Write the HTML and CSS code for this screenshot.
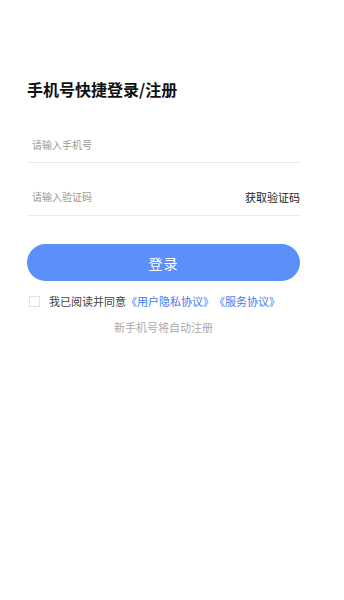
FILE: index.html
```html
<!DOCTYPE html>
<html lang="zh-CN">

<head>
    <meta charset="UTF-8">
    <meta name="viewport" content="width=device-width, initial-scale=1.0">
    <title>手机号快捷登录</title>
    <link rel="stylesheet" href="styles.css">
</head>

<body>
    <div class="login">
        <h1 class="title">手机号快捷登录/注册</h1>

        <div class="field">
            <input type="tel" placeholder="请输入手机号">
        </div>
        <div class="field">
            <input type="text" placeholder="请输入验证码">
            <span class="get-code">获取验证码</span>
        </div>

        <button class="btn-login">登录</button>

        <div class="agree">
            <span class="check"></span>
            <span>我已阅读并同意</span><a href="#">《用户隐私协议》</a><a href="#">《服务协议》</a>
        </div>
        <p class="tip">新手机号将自动注册</p>
    </div>
</body>

</html>
```

FILE: styles.css
```css
* {
    margin: 0;
    padding: 0;
    box-sizing: border-box;
}

body {
    background: #fff;
    font-family: "Noto Sans CJK SC", "Noto Sans", sans-serif;
    color: #222;
}

.login {
    padding: 77px 44px 0 27px;
}

.title {
    font-size: 16px;
    font-weight: 700;
    line-height: 24px;
    color: #111;
}

.field {
    display: flex;
    align-items: flex-end;
    height: 53px;
    padding-bottom: 11px;
    border-bottom: 1px solid #ececec;
}

.title + .field {
    margin-top: 9px;
    padding-bottom: 10px;
}

.field input {
    flex: 1;
    min-width: 0;
    height: 14px;
    line-height: 14px;
    border: none;
    outline: none;
    font-family: inherit;
    font-size: 10px;
    padding-left: 5px;
    background: transparent;
}

.field input::placeholder {
    color: #999;
}

.get-code {
    font-size: 11px;
    line-height: 14px;
    color: #222;
}

.btn-login {
    display: block;
    width: 100%;
    height: 37px;
    margin-top: 28px;
    border: none;
    border-radius: 19px;
    background: #5b8ff9;
    color: #fff;
    font-family: inherit;
    font-size: 14px;
    letter-spacing: 1px;
}

.agree {
    display: flex;
    align-items: center;
    height: 16px;
    margin-top: 12px;
    padding-left: 2px;
    font-size: 11px;
    color: #444;
    white-space: nowrap;
}

.check {
    width: 11px;
    height: 11px;
    border: 1px solid #e3e3e3;
    margin-right: 9px;
}

.agree a {
    color: #3d7bf5;
    text-decoration: none;
}

.tip {
    margin-top: 10px;
    line-height: 16px;
    text-align: center;
    font-size: 11px;
    color: #aaa;
}
```
